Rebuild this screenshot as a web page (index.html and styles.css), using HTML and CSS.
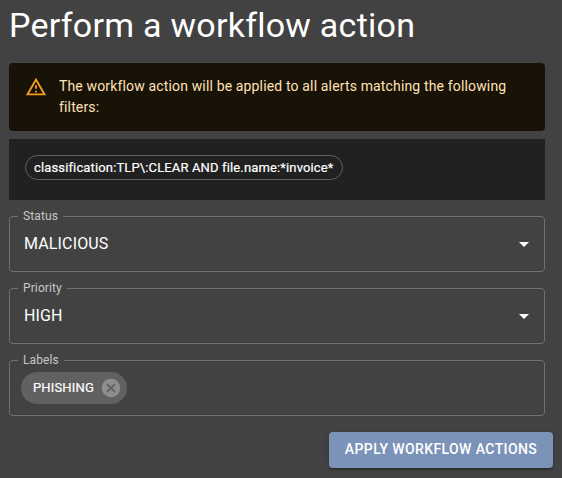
FILE: index.html
```html
<!DOCTYPE html>
<html lang="en">
<head>
<meta charset="utf-8">
<title>Perform a workflow action</title>
<link rel="stylesheet" href="styles.css">
</head>
<body>
<main class="drawer">
  <h1 class="title">Perform a workflow action</h1>
  <div class="alert">
    <svg class="alert-icon" viewBox="0 0 24 24"><path d="M12 5.99L19.53 19H4.47L12 5.99M12 2L1 21h22L12 2zm1 14h-2v2h2v-2zm0-6h-2v4h2v-4z"/></svg>
    <div class="alert-message">The workflow action will be applied to all alerts matching the following filters:</div>
  </div>
  <div class="filters"><span class="filter-chip">classification:TLP\:CLEAR AND file.name:*invoice*</span></div>
  <fieldset class="field">
    <legend>Status</legend>
    <div class="select"><span>MALICIOUS</span><svg class="arrow" viewBox="0 0 24 24"><path d="M7 10l5 5 5-5z"/></svg></div>
  </fieldset>
  <fieldset class="field">
    <legend>Priority</legend>
    <div class="select"><span>HIGH</span><svg class="arrow" viewBox="0 0 24 24"><path d="M7 10l5 5 5-5z"/></svg></div>
  </fieldset>
  <fieldset class="field">
    <legend>Labels</legend>
    <div class="tags"><span class="tag"><span class="tag-text">PHISHING</span><svg class="tag-remove" viewBox="0 0 24 24"><path d="M12 2C6.47 2 2 6.47 2 12s4.47 10 10 10 10-4.47 10-10S17.53 2 12 2zm5 13.59L15.59 17 12 13.41 8.41 17 7 15.59 10.59 12 7 8.41 8.41 7 12 10.59 15.59 7 17 8.41 13.41 12 17 15.59z"/></svg></span></div>
  </fieldset>
</main>
<div class="actions"><button class="apply" type="button">APPLY WORKFLOW ACTIONS</button></div>
</body>
</html>
```
FILE: styles.css
```css
* { box-sizing: border-box; }

body {
  margin: 0;
  height: 478px;
  overflow: hidden;
  background: #424242;
  color: #fff;
  font-family: Roboto, "Liberation Sans", sans-serif;
}

.drawer { padding: 4px 17px 0 9px; }

.title {
  margin: 0 0 17px;
  font-size: 34px;
  font-weight: 400;
  line-height: 42px;
  letter-spacing: 0.00735em;
}

.alert {
  display: flex;
  height: 68px;
  padding: 6px 16px;
  border-radius: 4px;
  background: #191207;
  color: #ffe2b7;
  font-size: 14px;
  line-height: 21px;
  letter-spacing: 0.01071em;
}

.alert-icon {
  flex: none;
  width: 22px;
  height: 22px;
  margin: 7px 12px 0 0;
  fill: #f39c1f;
}

.alert-message { padding: 7px 0; }

.filters {
  display: flex;
  align-items: flex-start;
  height: 61px;
  margin-top: 8px;
  padding: 16px;
  background: #212121;
}

.filter-chip {
  height: 25px;
  padding: 0 8px;
  border: 1px solid #616161;
  border-radius: 13px;
  font-size: 13px;
  font-weight: 450;
  letter-spacing: 0.14px;
  line-height: 23px;
  white-space: nowrap;
}

.field {
  min-width: 0;
  height: 61px;
  margin: 11px 0 0;
  padding: 0;
  border: 1px solid #717171;
  border-radius: 4px;
}

.field legend {
  height: 11px;
  margin-left: 8px;
  padding: 0 5px;
  color: #c6c6c6;
  font-size: 12px;
  line-height: 11px;
  letter-spacing: 0.00938em;
}

.select {
  display: flex;
  align-items: center;
  justify-content: space-between;
  height: 44px;
  padding: 0 8px 0 14px;
  font-size: 16px;
  letter-spacing: 0.00938em;
}

.select span { padding-bottom: 2px; }

.arrow {
  width: 24px;
  height: 24px;
  fill: #fff;
}

.tags { display: flex; padding: 6px 11px; }

.tag {
  display: flex;
  align-items: center;
  height: 32px;
  padding: 0 5px 0 12px;
  border-radius: 16px;
  background: #616161;
  font-size: 13px;
  letter-spacing: 0.16px;
}

.tag-text {
  padding-bottom: 1px;
  -webkit-text-stroke: 0.2px #fff;
}

.filter-chip { font-weight: 400; -webkit-text-stroke: 0.2px #fff; }

.tag-remove {
  width: 22px;
  height: 22px;
  margin-left: 6px;
  fill: #8e8e8e;
}

.actions {
  display: flex;
  justify-content: flex-end;
  padding: 16px 9px 0;
}

.apply {
  width: 224px;
  height: 36px;
  padding: 0 0 2px;
  border: 0;
  border-radius: 4px;
  background: #7c93b9;
  color: #fff;
  font-family: inherit;
  font-size: 14px;
  font-weight: 500;
  line-height: 24px;
  letter-spacing: 0.02857em;
  white-space: nowrap;
  box-shadow: 0 3px 1px -2px rgba(0,0,0,.2), 0 2px 2px rgba(0,0,0,.14), 0 1px 5px rgba(0,0,0,.12);
}
```
